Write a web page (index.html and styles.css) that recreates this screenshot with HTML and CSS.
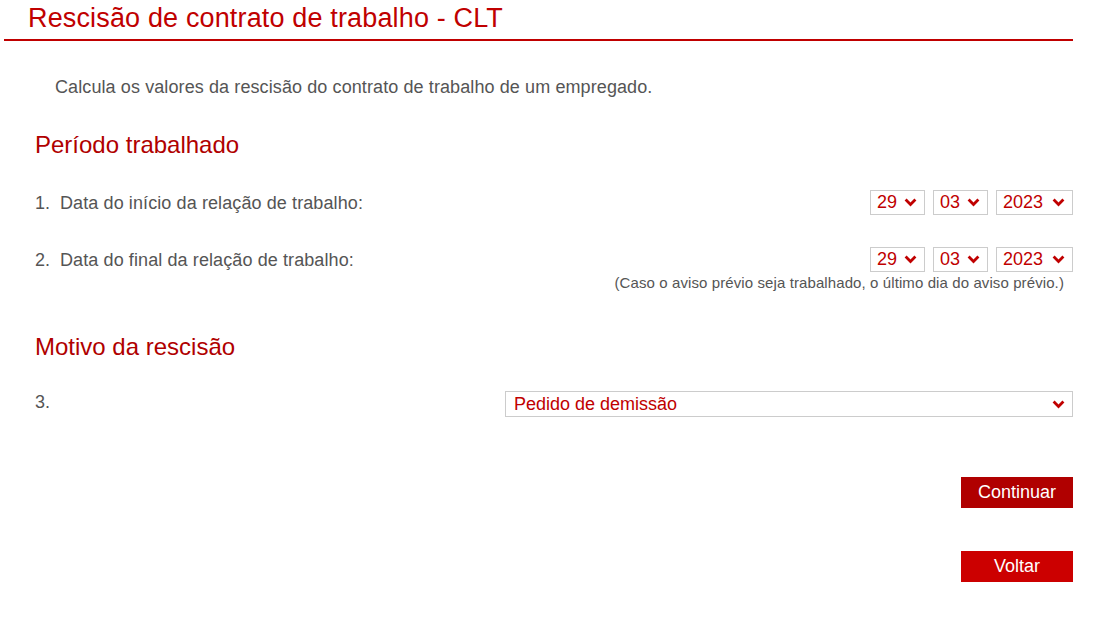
FILE: index.html
```html
<!DOCTYPE html>
<html lang="pt-BR">
<head>
    <meta charset="UTF-8">
    <meta name="viewport" content="width=device-width, initial-scale=1.0">
    <title>Rescisão de contrato de trabalho - CLT</title>
    <link rel="stylesheet" href="styles.css">
</head>
<body>
    <header class="page-header">
        <h1>Rescisão de contrato de trabalho - CLT</h1>
    </header>

    <main class="calc">
        <p class="intro">Calcula os valores da rescisão do contrato de trabalho de um empregado.</p>

        <section class="group">
            <h2>Período trabalhado</h2>

            <div class="field">
                <label class="field-label"><span class="num">1.</span>Data do início da relação de trabalho:</label>
                <div class="field-input">
                    <div class="date">
                        <span class="select-wrap day">
                            <select><option>29</option></select>
                            <svg class="chevron" viewBox="0 0 13 9"><polyline points="1.6,1.6 6.5,6.5 11.4,1.6"/></svg>
                        </span>
                        <span class="select-wrap month">
                            <select><option>03</option></select>
                            <svg class="chevron" viewBox="0 0 13 9"><polyline points="1.6,1.6 6.5,6.5 11.4,1.6"/></svg>
                        </span>
                        <span class="select-wrap year">
                            <select><option>2023</option></select>
                            <svg class="chevron" viewBox="0 0 13 9"><polyline points="1.6,1.6 6.5,6.5 11.4,1.6"/></svg>
                        </span>
                    </div>
                </div>
            </div>

            <div class="field">
                <label class="field-label"><span class="num">2.</span>Data do final da relação de trabalho:</label>
                <div class="field-input">
                    <div class="date">
                        <span class="select-wrap day">
                            <select><option>29</option></select>
                            <svg class="chevron" viewBox="0 0 13 9"><polyline points="1.6,1.6 6.5,6.5 11.4,1.6"/></svg>
                        </span>
                        <span class="select-wrap month">
                            <select><option>03</option></select>
                            <svg class="chevron" viewBox="0 0 13 9"><polyline points="1.6,1.6 6.5,6.5 11.4,1.6"/></svg>
                        </span>
                        <span class="select-wrap year">
                            <select><option>2023</option></select>
                            <svg class="chevron" viewBox="0 0 13 9"><polyline points="1.6,1.6 6.5,6.5 11.4,1.6"/></svg>
                        </span>
                    </div>
                    <p class="hint">(Caso o aviso prévio seja trabalhado, o último dia do aviso prévio.)</p>
                </div>
            </div>
        </section>

        <section class="group">
            <h2>Motivo da rescisão</h2>

            <div class="field reason">
                <label class="field-label"><span class="num">3.</span></label>
                <span class="select-wrap wide">
                    <select>
                        <option>Pedido de demissão</option>
                        <option>Dispensa sem justa causa</option>
                        <option>Dispensa com justa causa</option>
                        <option>Término do contrato de experiência</option>
                    </select>
                    <svg class="chevron" viewBox="0 0 13 9"><polyline points="1.6,1.6 6.5,6.5 11.4,1.6"/></svg>
                </span>
            </div>
        </section>

        <div class="actions">
            <button type="button" class="btn">Continuar</button>
            <button type="button" class="btn btn-back">Voltar</button>
        </div>
    </main>
</body>
</html>
```

FILE: styles.css
```css
* {
    box-sizing: border-box;
    margin: 0;
    padding: 0;
}

body {
    background-color: #fff;
    font-family: 'Liberation Sans', Arial, Helvetica, sans-serif;
    font-size: 18px;
    letter-spacing: 0.1px;
    color: #555;
}

.page-header {
    margin: 0 27px 0 4px;
    padding: 3px 0 6px 24px;
    border-bottom: 2px solid #c00000;
}

h1 {
    font-size: 27px;
    line-height: 30px;
    font-weight: normal;
    letter-spacing: 0.15px;
    color: #c00000;
}

.calc {
    padding: 0 27px 0 35px;
}

.intro {
    line-height: 22px;
    margin-top: 35px;
    padding-left: 20px;
}

.group h2 {
    font-size: 24px;
    line-height: 28px;
    font-weight: normal;
    letter-spacing: 0;
    color: #b00000;
    margin-top: 33px;
}

.group + .group h2 {
    margin-top: 41px;
}

.field {
    display: flex;
    justify-content: space-between;
    align-items: flex-start;
    margin-top: 31px;
}

.field + .field {
    margin-top: 32px;
}

.field-label {
    line-height: 22px;
    padding-top: 2px;
}

.num {
    display: inline-block;
    width: 25px;
}

.field-input {
    display: flex;
    flex-direction: column;
    align-items: flex-end;
}

.date {
    display: flex;
    gap: 8px;
}

.select-wrap {
    position: relative;
    display: inline-block;
}

.select-wrap select {
    appearance: none;
    -webkit-appearance: none;
    width: 100%;
    height: 25px;
    padding: 0 0 0 6px;
    border: 1px solid #ccc;
    border-radius: 0;
    background: #fff;
    color: #c00000;
    font-family: inherit;
    font-size: 18px;
    line-height: 23px;
}

/* seta vermelha no lugar da seta nativa do select */
.chevron {
    position: absolute;
    top: 8px;
    right: 8px;
    width: 13px;
    height: 9px;
    pointer-events: none;
    fill: none;
    stroke: #c00000;
    stroke-width: 2.8;
}

.day,
.month {
    width: 55px;
}

.year {
    width: 77px;
}

.hint {
    font-size: 15px;
    line-height: 18px;
    margin: 2px 9px 0 0;
}

.reason {
    margin-top: 30px;
}

.reason .field-label {
    padding-top: 0;
}

.wide {
    width: 568px;
}

.wide select {
    height: 26px;
    padding-left: 8px;
}

.wide .chevron {
    top: 9px;
    right: 8px;
}

.actions {
    display: flex;
    flex-direction: column;
    align-items: flex-end;
    gap: 43px;
    margin-top: 60px;
}

.btn {
    width: 112px;
    height: 31px;
    border: none;
    background-color: #b00000;
    color: #fff;
    font-family: inherit;
    font-size: 18px;
    cursor: pointer;
}

.btn-back {
    background-color: #cc0000;
}
```
